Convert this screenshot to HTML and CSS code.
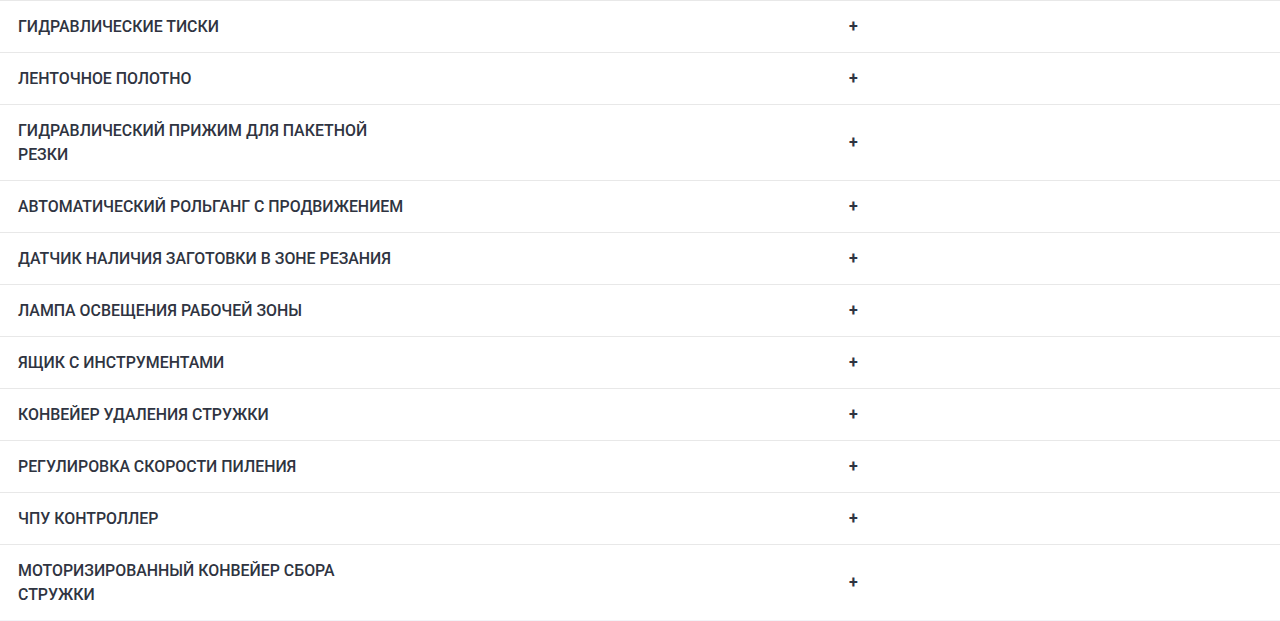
FILE: index.html
```html
<!doctype html>
<html lang="ru">
  <head>
    <meta charset="UTF-8" />
    <title>Опции</title>
    <link rel="stylesheet" href="styles.css">
  </head>
  <body>
    <div class="options-list">
      <div class="option-row">
        <div class="option-name">Гидравлические тиски</div>
        <div class="option-toggle">+</div>
      </div>
      <div class="option-row">
        <div class="option-name">Ленточное полотно</div>
        <div class="option-toggle">+</div>
      </div>
      <div class="option-row">
        <div class="option-name">Гидравлический прижим для пакетной резки</div>
        <div class="option-toggle">+</div>
      </div>
      <div class="option-row">
        <div class="option-name">Автоматический рольганг с продвижением</div>
        <div class="option-toggle">+</div>
      </div>
      <div class="option-row">
        <div class="option-name">Датчик наличия заготовки в зоне резания</div>
        <div class="option-toggle">+</div>
      </div>
      <div class="option-row">
        <div class="option-name">Лампа освещения рабочей зоны</div>
        <div class="option-toggle">+</div>
      </div>
      <div class="option-row">
        <div class="option-name">Ящик с инструментами</div>
        <div class="option-toggle">+</div>
      </div>
      <div class="option-row">
        <div class="option-name">Конвейер удаления стружки</div>
        <div class="option-toggle">+</div>
      </div>
      <div class="option-row">
        <div class="option-name">Регулировка скорости пиления</div>
        <div class="option-toggle">+</div>
      </div>
      <div class="option-row">
        <div class="option-name">ЧПУ контроллер</div>
        <div class="option-toggle">+</div>
      </div>
      <div class="option-row">
        <div class="option-name">Моторизированный конвейер сбора стружки</div>
        <div class="option-toggle">+</div>
      </div>
    </div>
  </body>
</html>
```

FILE: styles.css
```css
:root {
  --dark-text: #2f3441;
  --line: #e8e8e8;
}

* {
  box-sizing: border-box;
}

body {
  margin: 0;
  background: #ffffff;
  font-family: Roboto, "Noto Sans", sans-serif;
  color: var(--dark-text);
}

.options-list {
  border-bottom: 1px solid #f3f3f7;
}

.option-row {
  display: grid;
  grid-template-columns: 1fr 2fr;
  align-items: center;
  border-top: 1px solid var(--line);
}

.option-name {
  padding: 14px 18px 13px;
  font-size: 15.9px;
  font-weight: 500;
  line-height: 24px;
  text-transform: uppercase;
}

.option-toggle {
  text-align: center;
  font-size: 16px;
  font-weight: 700;
  line-height: 24px;
}
```
